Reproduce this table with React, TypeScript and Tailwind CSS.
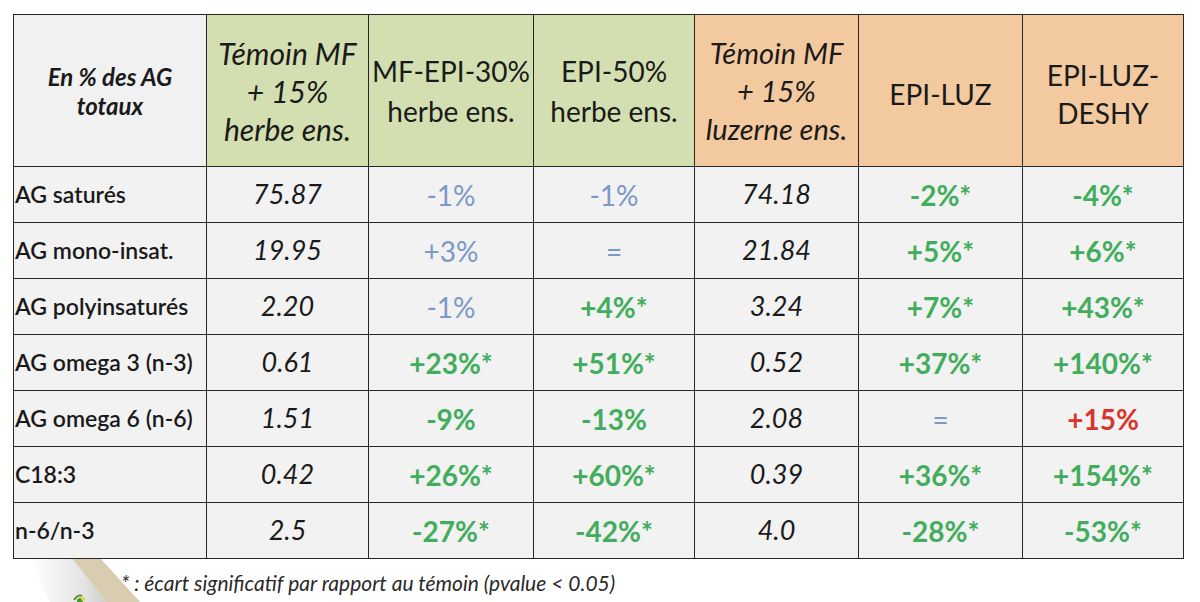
import React from 'react';

type Tone = 'num' | 'blue' | 'green' | 'red';

interface Cell {
  v: string;
  t: Tone;
}

interface Row {
  label: string;
  cells: Cell[];
}

const n = (v: string): Cell => ({ v, t: 'num' });
const b = (v: string): Cell => ({ v, t: 'blue' });
const g = (v: string): Cell => ({ v, t: 'green' });
const r = (v: string): Cell => ({ v, t: 'red' });

const rows: Row[] = [
  { label: 'AG saturés', cells: [n('75.87'), b('-1%'), b('-1%'), n('74.18'), g('-2%*'), g('-4%*')] },
  { label: 'AG mono-insat.', cells: [n('19.95'), b('+3%'), b('='), n('21.84'), g('+5%*'), g('+6%*')] },
  { label: 'AG polyinsaturés', cells: [n('2.20'), b('-1%'), g('+4%*'), n('3.24'), g('+7%*'), g('+43%*')] },
  { label: 'AG omega 3 (n-3)', cells: [n('0.61'), g('+23%*'), g('+51%*'), n('0.52'), g('+37%*'), g('+140%*')] },
  { label: 'AG omega 6 (n-6)', cells: [n('1.51'), g('-9%'), g('-13%'), n('2.08'), b('='), r('+15%')] },
  { label: 'C18:3', cells: [n('0.42'), g('+26%*'), g('+60%*'), n('0.39'), g('+36%*'), g('+154%*')] },
  { label: 'n-6/n-3', cells: [n('2.5'), g('-27%*'), g('-42%*'), n('4.0'), g('-28%*'), g('-53%*')] },
];

const toneClass = (t: Tone) => {
  switch (t) {
    case 'num': return 'italic text-[#1a1a1a] text-[27px]';
    case 'blue': return 'text-[#7b98c6] text-[28px]';
    case 'green': return 'font-bold text-[#42ad5c] text-[28px]';
    case 'red': return 'font-bold text-[#d8362d] text-[28px]';
  }
};

const widths = ['w-[193px]', 'w-[162px]', 'w-[165px]', 'w-[161px]', 'w-[164px]', 'w-[164px]', 'w-[161px]'];

const cellBorder = 'border-[1.5px] border-[#262626]';

export default function App() {
  return (
    <div
      className="relative w-[1200px] h-[602px] overflow-hidden bg-white"
      style={{ fontFamily: 'Lato, "Open Sans", sans-serif' }}
    >
      {/* decoration from the slide, bottom left */}
      <svg className="absolute left-0 top-[520px]" width="160" height="82" viewBox="0 0 160 82">
        <defs>
          <linearGradient id="sh" x1="0" x2="1" y1="0" y2="0">
            <stop offset="0" stopColor="#ffffff" />
            <stop offset="0.7" stopColor="#e4e4e4" />
            <stop offset="1" stopColor="#cfcfcf" />
          </linearGradient>
        </defs>
        <path d="M30 38 L72 38 L106 82 L50 82 Z" fill="url(#sh)" />
        <path d="M72 38 L100 38 L140 82 L106 82 Z" fill="#d8ccb1" />
        <path d="M74 80 q4 -6 8 -4" stroke="#6d8c2c" strokeWidth="2" fill="none" />
        <circle cx="80" cy="81" r="3" fill="#3d9a32" />
        <circle cx="83" cy="79" r="2" fill="#e7d22e" />
      </svg>

      <div className="relative pt-[14px] pl-[13px]">
        <table className="border-collapse table-fixed bg-[#f2f2f2]">
          <thead>
            <tr className="h-[152px]">
              <th className={`${cellBorder} ${widths[0]} bg-[#f1f1f1] align-middle px-1 text-[24px] font-bold italic leading-[29px] text-[#1a1a1a] whitespace-nowrap`}>
                <span className="text-[24px]">En % des AG</span>
                <br />
                <span className="text-[24px]">totaux</span>
              </th>
              <th className={`${cellBorder} ${widths[1]} bg-[#d3dfb0] font-normal italic text-[30px] leading-[38px] text-[#1a1a1a] whitespace-nowrap`}>
                Témoin MF<br />+ 15%<br />herbe ens.
              </th>
              <th className={`${cellBorder} ${widths[2]} bg-[#d3dfb0] font-normal text-[28px] leading-[40px] text-[#1a1a1a] whitespace-nowrap`}>
                MF-EPI-30%<br />herbe ens.
              </th>
              <th className={`${cellBorder} ${widths[3]} bg-[#d3dfb0] font-normal text-[28px] leading-[40px] text-[#1a1a1a]`}>
                EPI-50%<br />herbe ens.
              </th>
              <th className={`${cellBorder} ${widths[4]} bg-[#f3caa0] font-normal italic text-[29px] leading-[38px] text-[#1a1a1a] whitespace-nowrap`}>
                Témoin MF<br />+ 15%<br />luzerne ens.
              </th>
              <th className={`${cellBorder} ${widths[5]} bg-[#f3caa0] font-normal text-[28px] leading-[38px] text-[#1a1a1a] pt-[6px]`}>
                EPI-LUZ
              </th>
              <th className={`${cellBorder} ${widths[6]} bg-[#f3caa0] font-normal text-[28px] leading-[38px] text-[#1a1a1a] pt-[6px]`}>
                EPI-LUZ-<br />DESHY
              </th>
            </tr>
          </thead>
          <tbody>
            {rows.map((row) => (
              <tr key={row.label} className="h-[56px]">
                <td className={`${cellBorder} pl-[1px] text-[23px] font-semibold text-[#1a1a1a] whitespace-nowrap`}>
                  {row.label}
                </td>
                {row.cells.map((c, i) => (
                  <td key={i} className={`${cellBorder} text-center ${toneClass(c.t)}`}>
                    {c.v}
                  </td>
                ))}
              </tr>
            ))}
          </tbody>
        </table>
      </div>

      <p className="relative mt-[8px] ml-[121px] text-[21px] italic text-[#2a2a2a]">
        * : écart significatif par rapport au témoin (pvalue &lt; 0.05)
      </p>
    </div>
  );
}
